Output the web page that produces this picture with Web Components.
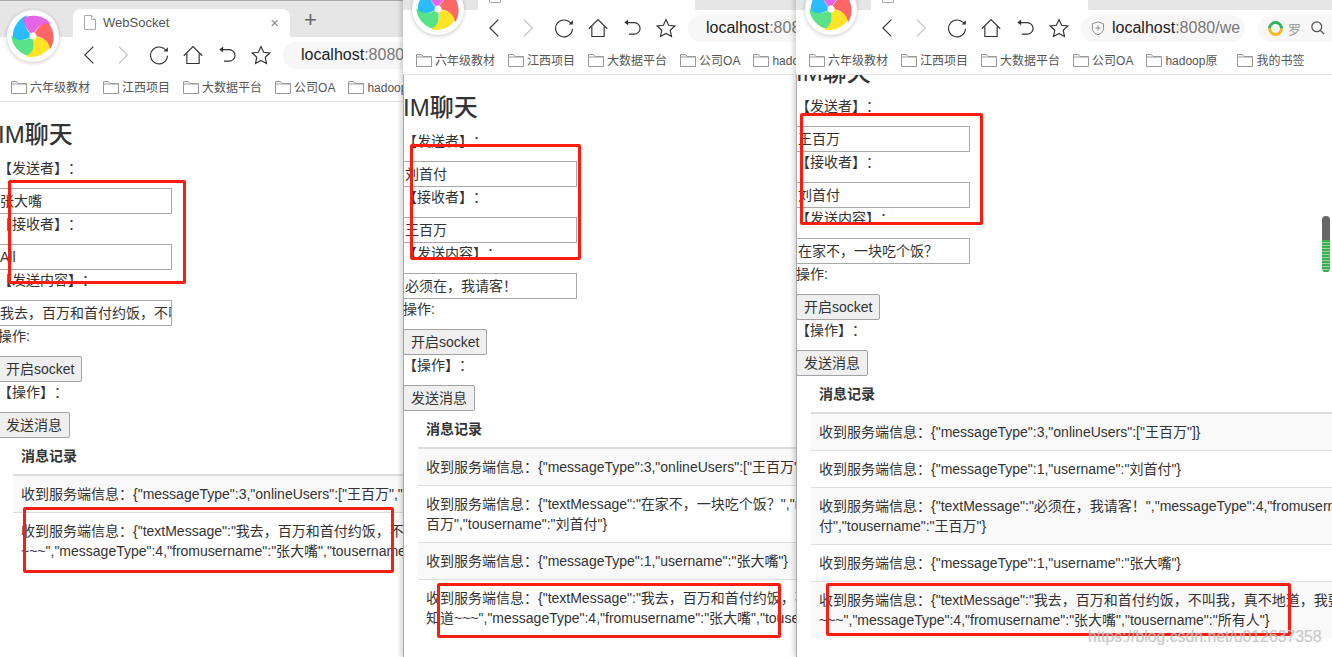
<!DOCTYPE html>
<html lang="zh">
<head>
<meta charset="utf-8">
<title>WebSocket</title>
<style>
  html, body { margin: 0; padding: 0; background: #fff; overflow: hidden; }
  body { font-family: "Liberation Sans", "Noto Sans CJK SC", sans-serif; font-size: 14px; color: #333; text-spacing-trim: space-all; }
</style>
</head>
<body>
<im-desktop>
  <im-window left="-2" top="0" width="405" tab="WebSocket" bookmarks="六年级教材,江西项目,大数据平台,公司OA,hadoop原">
    <im-chat sender="张大嘴" receiver="All" content="我去，百万和首付约饭，不叫我，真不地道，我要去告诉所有人知道~~~">
      <msg-row>收到服务端信息：{"messageType":3,"onlineUsers":["王百万","刘首付","张大嘴"]}</msg-row>
      <msg-row>收到服务端信息：{"textMessage":"我去，百万和首付约饭，不叫我，真不地道，我要去告诉所有人<br>~~~","messageType":4,"fromusername":"张大嘴","tousername":"所有人"}</msg-row>
    </im-chat>
  </im-window>
  <im-window left="403" top="-27" width="393" edge tab="WebSocket" bookmarks="六年级教材,江西项目,大数据平台,公司OA,hadoop原">
    <im-chat sender="刘首付" receiver="王百万" content="必须在，我请客！">
      <msg-row>收到服务端信息：{"messageType":3,"onlineUsers":["王百万","张大嘴"]}</msg-row>
      <msg-row>收到服务端信息：{"textMessage":"在家不，一块吃个饭？","messageType":4,"fromusername":"王<br>百万","tousername":"刘首付"}</msg-row>
      <msg-row>收到服务端信息：{"messageType":1,"username":"张大嘴"}</msg-row>
      <msg-row>收到服务端信息：{"textMessage":"我去，百万和首付约饭，不叫我，真不地道，我要去告诉所有人<br>知道~~~","messageType":4,"fromusername":"张大嘴","tousername":"所有人"}</msg-row>
    </im-chat>
  </im-window>
  <im-window left="796" top="-27" width="536" edge shield scrolled tab="WebSocket" bookmarks="六年级教材,江西项目,大数据平台,公司OA,hadoop原,我的书签">
    <im-chat sender="王百万" receiver="刘首付" content="在家不，一块吃个饭？">
      <msg-row>收到服务端信息：{"messageType":3,"onlineUsers":["王百万"]}</msg-row>
      <msg-row>收到服务端信息：{"messageType":1,"username":"刘首付"}</msg-row>
      <msg-row>收到服务端信息：{"textMessage":"必须在，我请客！","messageType":4,"fromusername":"刘首<br>付","tousername":"王百万"}</msg-row>
      <msg-row>收到服务端信息：{"messageType":1,"username":"张大嘴"}</msg-row>
      <msg-row>收到服务端信息：{"textMessage":"我去，百万和首付约饭，不叫我，真不地道，我要去告诉<br>~~~","messageType":4,"fromusername":"张大嘴","tousername":"所有人"}</msg-row>
    </im-chat>
  </im-window>
  <red-mark x="8" y="180" w="178" h="104"></red-mark>
  <red-mark x="23" y="507" w="371" h="66"></red-mark>
  <red-mark x="410" y="144" w="171" h="116"></red-mark>
  <red-mark x="437" y="583" w="344" h="55"></red-mark>
  <red-mark x="800" y="113" w="183" h="112"></red-mark>
  <red-mark x="826" y="583" w="465" h="53"></red-mark>
  <span class="watermark" slot="mark">https://blog.csdn.net/u012637358</span>
</im-desktop>

<script>
const ICONS = {
  back: `<path d="M16 2 5 13l11 11" />`,
  forward: `<path d="M5 2l11 11L5 24" stroke="#c4c4c4" />`,
  reload: `<path d="M22.500 8A11 11 0 1 0 24 14" /><path d="M19 8.500h5.500V3z" fill="#333" stroke="none" />`,
  home: `<path d="M1 14 13 2l12 12" /><path d="M5 11v13h16V11" />`,
  undo: `<path d="M6 6h10a7.500 7.500 0 0 1 0 15h-7" /><path d="M8 2 3 6l5 3.500z" fill="#333" stroke="none" />`,
  star: `<path d="M13 2l3.400 7.400 8 1-5.900 5.500 1.600 8L13 20l-7.100 3.900 1.600-8L1.600 10.400l8-1z" />`,
  shield: `<path d="M13 3l9 3v8c0 5-4 8-9 10-5-2-9-5-9-10V6z" stroke="#888" /><path d="M13 9v8M9 13h8" stroke="#888" />`,
  search: `<circle cx="11" cy="11" r="8" stroke="#555" stroke-width="2" /><path d="M17 17l6 6" stroke="#555" stroke-width="2" />`
};

function iconSvg(name, size) {
  return `<svg width="${size}" height="${size}" viewBox="0 0 26 26" fill="none" stroke="#333" stroke-width="1.500">${ICONS[name]}</svg>`;
}

const FOLDER = `<svg width="16" height="14" viewBox="0 0 16 14" fill="#fff" stroke="#999"><path d="M.5 13.500V1.500h5l1.500 2h8.500v10z" /><path d="M.5 4h15" /></svg>`;
const PAGE_ICON = `<svg width="12" height="15" viewBox="0 0 12 15" fill="#fff" stroke="#aaa"><path d="M.5.5h7l4 4v10H.5z" /><path d="M7.500.5v4h4" /></svg>`;

// colourful pinwheel of the browser
const LOGO_PETALS = [
  ["#1db9fb", 288], ["#4fe07f", 216], ["#ffe21a", 144], ["#ff5c5c", 72], ["#e45be6", 0]
].map(([fill, turn]) => `<path transform="rotate(${turn})" fill="${fill}" fill-opacity=".94" d="M0 0C-6-6-10-12-9-18-2-22 11-21 18-12 10-14 3-9 0 0z" />`).join("");

class ImDesktop extends HTMLElement {
  constructor() {
    super();
    this.attachShadow({ mode: "open" }).innerHTML = /*html*/ `
      <style>
        :host { display: block; position: relative; width: 1332px; height: 657px; overflow: hidden; background: #fff; }
        .bar { position: absolute; left: 1322px; top: 216px; width: 8px; height: 56px; border-radius: 4px; background: #666; overflow: hidden; }
        .bar i { display: block; margin-top: 24px; height: 32px; background: repeating-linear-gradient(#35b34a 0 2px, #9ad6a4 2px 3px); }
        ::slotted(.watermark) { position: absolute; left: 1088px; top: 628px; font: 15.800px/18px "Liberation Sans", sans-serif; color: rgba(195,195,195,.75); text-shadow: 0 0 1px rgba(195,195,195,.6); white-space: nowrap; z-index: 6; }
      </style>
      <slot></slot>
      <slot name="mark"></slot>
      <div class="bar"><i></i></div>`;
  }
}

class RedMark extends HTMLElement {
  constructor() {
    super();
    this.attachShadow({ mode: "open" }).innerHTML = /*html*/ `
      <style>
        :host { display: block; position: absolute; box-sizing: border-box; border: 3px solid #fb1d10; border-radius: 2px; z-index: 5; }
      </style>`;
  }
  connectedCallback() {
    const px = (name) => this.getAttribute(name) + "px";
    this.style.left = px("x");
    this.style.top = px("y");
    this.style.width = px("w");
    this.style.height = px("h");
  }
}

class ImWindow extends HTMLElement {
  constructor() {
    super();
    this.attachShadow({ mode: "open" });
  }
  connectedCallback() {
    const marks = (this.getAttribute("bookmarks") || "").split(",");
    const shield = this.hasAttribute("shield");
    this.style.left = this.getAttribute("left") + "px";
    this.style.top = this.getAttribute("top") + "px";
    this.style.width = this.getAttribute("width") + "px";
    this.shadowRoot.innerHTML = /*html*/ `
      <style>
        :host { display: flex; flex-direction: column; position: absolute; height: 684px; overflow: hidden; background: #fff; }
        :host([edge]) { box-shadow: inset 1px 0 0 #aaa, -3px 0 4px rgba(0,0,0,.14); }
        .strip { flex: none; display: flex; align-items: flex-end; height: 37px; padding-left: 75px; background: #e6e6e6; box-shadow: inset 0 1px 0 #aaa; }
        .tab { display: flex; align-items: center; box-sizing: border-box; width: 217px; height: 28px; padding: 0 11px 2px; gap: 7px; background: #fff; border-radius: 8px 8px 0 0; color: #555; font-size: 13px; }
        .tab span { flex: 1; }
        .tab b { font: normal 15px "Liberation Sans", sans-serif; color: #888; }
        .plus { margin: 0 0 6px 14px; font: 22px/22px "Liberation Sans", sans-serif; color: #666; }
        .tools { flex: none; display: flex; align-items: center; height: 36px; padding-left: 76px; background: #fff; }
        .tools svg { display: block; flex: none; }
        .btn { flex: none; width: 34px; display: flex; justify-content: center; }
        .pill { flex: none; display: flex; align-items: center; gap: 6px; box-sizing: border-box; width: ${shield ? 164 : 400}px; height: 27px; margin-left: 5px; padding-left: ${shield ? 9 : 18}px; border-radius: 14px; background: #f7f7f7; font-size: 16px; color: #222; white-space: nowrap; overflow: hidden; }
        .pill em { font-style: normal; color: #777; }
        .find { flex: none; display: flex; align-items: center; gap: 5px; width: 80px; height: 27px; margin-left: 13px; padding-left: 10px; box-sizing: border-box; border-radius: 14px 0 0 14px; background: #f7f7f7; color: #999; font-size: 13px; }
        .ring { flex: none; width: 9px; height: 9px; border: 3px solid; border-color: #2fb45a #2fb45a #fdb813 #fdb813; border-radius: 50%; transform: rotate(-45deg); }
        .find svg { margin-left: 4px; }
        .marks { flex: none; display: flex; align-items: center; box-sizing: border-box; height: 29px; padding: 0 0 1px 13px; gap: 13px; background: #fff; border-bottom: 1px solid #e4e4e4; font-size: 12px; color: #555; white-space: nowrap; overflow: hidden; }
        .marks span { flex: none; display: flex; align-items: center; gap: 3px; }
        .marks svg { flex: none; }
        .marks span:nth-child(5) { width: 78px; overflow: hidden; }
        .page { flex: 1; min-height: 0; overflow: hidden; }
        .inner { margin-top: ${this.hasAttribute("scrolled") ? -35 : 0}px; }
        .logo { position: absolute; left: 9px; top: 10px; width: 52px; height: 52px; border-radius: 50%; background: #fff; box-shadow: 0 1px 4px rgba(0,0,0,.22); }
        .logo svg { display: block; }
      </style>
      <div class="strip">
        <div class="tab">${PAGE_ICON}<span>${this.getAttribute("tab")}</span><b>×</b></div>
        <div class="plus">+</div>
      </div>
      <div class="tools">
        ${["back", "forward", "reload", "home", "undo", "star"].map((n) => `<div class="btn">${iconSvg(n, 20)}</div>`).join("")}
        <div class="pill">${shield ? iconSvg("shield", 16) : ""}<div>localhost<em>:8080/${shield ? "we" : "websocket"}</em></div></div>
        ${shield ? `<div class="find"><div class="ring"></div>罗${iconSvg("search", 16)}</div>` : ""}
      </div>
      <div class="marks">${marks.map((m) => `<span>${FOLDER}${m}</span>`).join("")}</div>
      <div class="page"><div class="inner"><slot></slot></div></div>
      <div class="logo"><svg width="52" height="52" viewBox="-26 -26 52 52">${LOGO_PETALS}<circle r="3.500" fill="#fff" /></svg></div>`;
  }
}

class ImChat extends HTMLElement {
  constructor() {
    super();
    this.attachShadow({ mode: "open" });
  }
  connectedCallback() {
    const field = (name) => `<div class="field">${this.getAttribute(name)}</div>`;
    this.shadowRoot.innerHTML = /*html*/ `
      <style>
        :host { display: block; line-height: 20px; }
        h3 { margin: 20px 0 10px; font-size: 24px; line-height: 26px; font-weight: 500; }
        .row { height: 20px; white-space: nowrap; }
        .field { box-sizing: border-box; width: 174px; height: 26px; margin-top: 10px; padding: 0 1px; border: 1px solid #a9a9a9; line-height: 24px; white-space: nowrap; overflow: hidden; background: #fff; }
        button { display: block; height: 26px; margin-top: 10px; padding: 0 7px; border: 1px solid #a3a3a3; border-radius: 2px; background: #efefef; color: #333; font: inherit; line-height: 22px; }
        .table { width: 1200px; margin-left: 15px; }
        .head { padding: 8px; font-weight: bold; border-bottom: 2px solid #ddd; }
      </style>
      <h3>IM聊天</h3>
      <div class="row">【发送者】：</div>
      ${field("sender")}
      <div class="row">【接收者】：</div>
      ${field("receiver")}
      <div class="row">【发送内容】：</div>
      ${field("content")}
      <div class="row">操作:</div>
      <button>开启socket</button>
      <div class="row">【操作】：</div>
      <button>发送消息</button>
      <div class="table">
        <div class="head">消息记录</div>
        <slot></slot>
      </div>`;
  }
}

class MsgRow extends HTMLElement {
  constructor() {
    super();
    this.attachShadow({ mode: "open" }).innerHTML = /*html*/ `
      <style>
        :host { display: block; padding: 8px; border-top: 1px solid #ddd; white-space: nowrap; line-height: 20px; }
        :host(:nth-of-type(odd)) { background: #f9f9f9; }
        :host(:first-of-type) { border-top: none; }
      </style>
      <slot></slot>`;
  }
}

customElements.define("im-desktop", ImDesktop);
customElements.define("red-mark", RedMark);
customElements.define("im-window", ImWindow);
customElements.define("im-chat", ImChat);
customElements.define("msg-row", MsgRow);
</script>
</body>
</html>
